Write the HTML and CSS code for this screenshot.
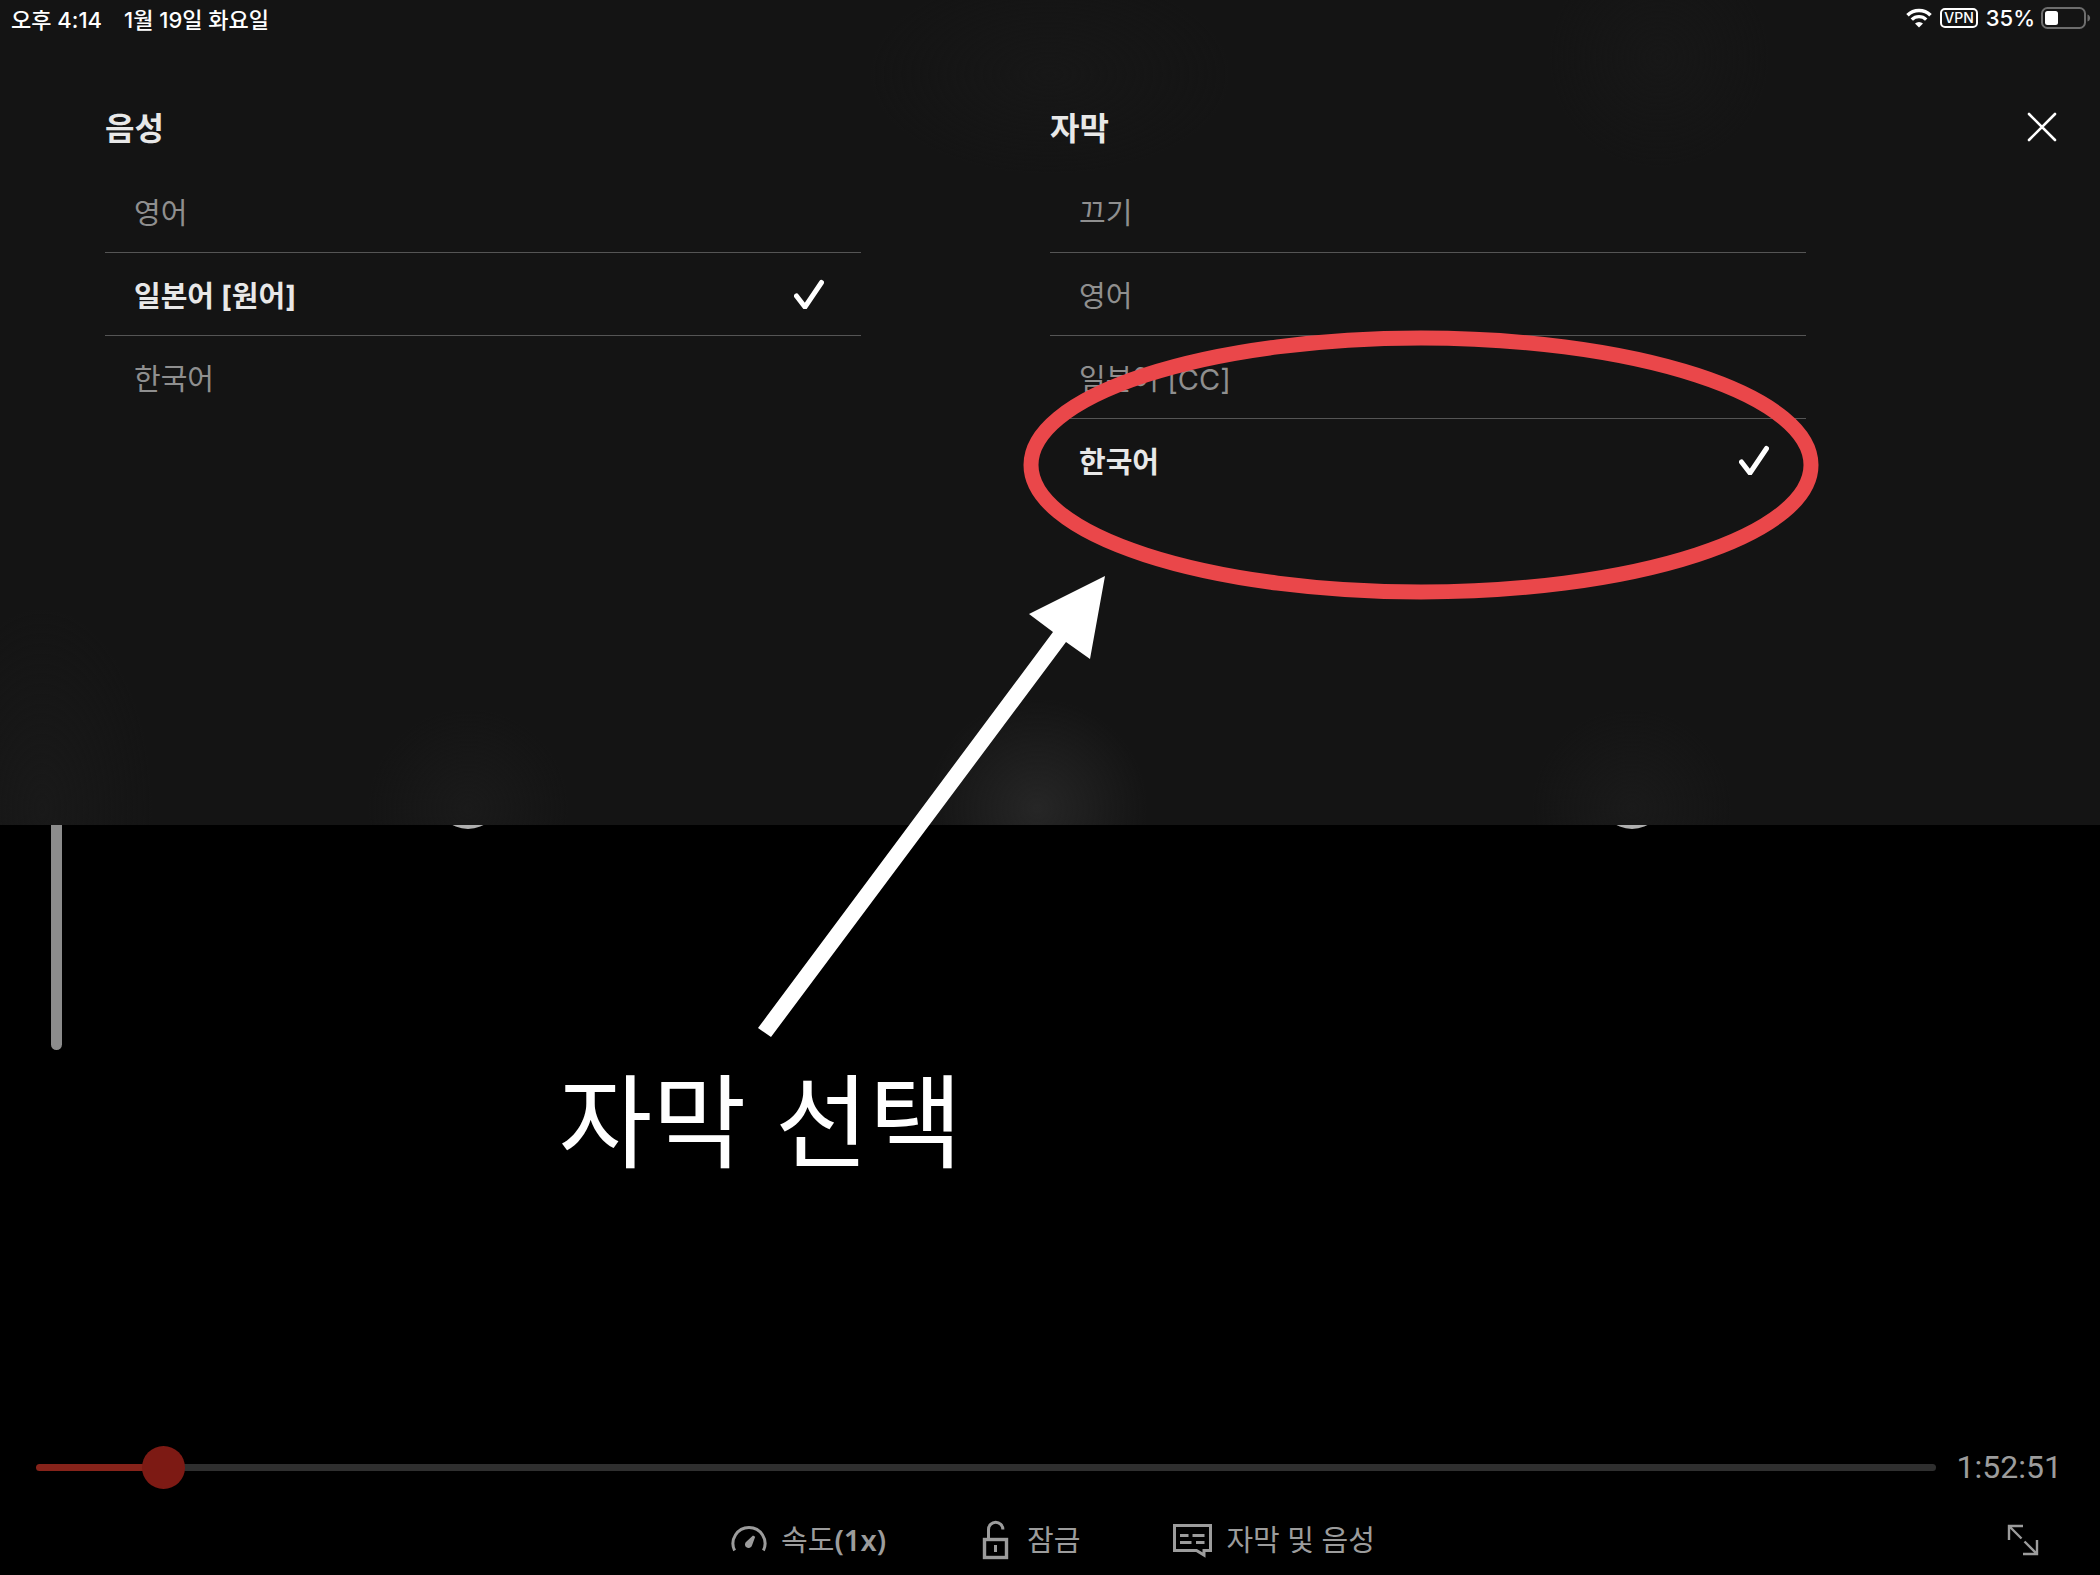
FILE: index.html
```
<!DOCTYPE html>
<html lang="ko">
<head>
  <meta charset="UTF-8">
  <title>자막 및 음성</title>
  <meta name="viewport" content="width=device-width, initial-scale=1.0">
  <link rel="stylesheet" href="styles.css">
</head>
<body>
  <div class="player">

    <div class="panel">
      <header class="status">
        <div class="status-left">
          <span>오후 4:14</span>
          <span>1월 19일 화요일</span>
        </div>
        <div class="status-right">
          <svg class="wifi" width="26" height="20" viewBox="0 0 26 20">
            <path d="M1.500 7.200A16.500 16.500 0 0 1 24.500 7.200" fill="none" stroke="#fff" stroke-width="3.600"/>
            <path d="M5.800 11.600A10.300 10.300 0 0 1 20.200 11.600" fill="none" stroke="#fff" stroke-width="3.400"/>
            <path d="M13 19.500L9 15.500A5.800 5.800 0 0 1 17 15.500Z" fill="#fff"/>
          </svg>
          <span class="vpn">VPN</span>
          <span>35%</span>
          <svg class="battery" width="50" height="22" viewBox="0 0 50 22">
            <rect x="1" y="1" width="43" height="20" rx="5.500" fill="none" stroke="#6d6d6d" stroke-width="2"/>
            <rect x="4" y="4" width="13" height="14" rx="2.500" fill="#fff"/>
            <path d="M46.500 7.500C50 8.500 50 13.500 46.500 14.500Z" fill="#6d6d6d"/>
          </svg>
        </div>
      </header>

      <div class="tracks">
        <section class="column">
          <h2>음성</h2>
          <ul>
            <li><label><input type="radio" name="audio">영어</label></li>
            <li><label><input type="radio" name="audio" checked>일본어 [원어]
              <svg class="check" width="30" height="30" viewBox="0 0 30 30"><path d="M2.500 17L11 28L27.500 3.500"/></svg></label></li>
            <li><label><input type="radio" name="audio">한국어</label></li>
          </ul>
        </section>
        <section class="column">
          <h2>자막</h2>
          <ul>
            <li><label><input type="radio" name="subs">끄기</label></li>
            <li><label><input type="radio" name="subs">영어</label></li>
            <li><label><input type="radio" name="subs">일본어 [CC]</label></li>
            <li><label><input type="radio" name="subs" checked>한국어
              <svg class="check" width="30" height="30" viewBox="0 0 30 30"><path d="M2.500 17L11 28L27.500 3.500"/></svg></label></li>
          </ul>
        </section>
        <button class="close" aria-label="닫기">
          <svg width="30" height="30" viewBox="0 0 30 30"><path d="M2 2L28 28M28 2L2 28" stroke="#fff" stroke-width="2.600" stroke-linecap="round"/></svg>
        </button>
      </div>
    </div>

    <div class="video">
      <input class="brightness" type="range" min="0" max="100" value="100" aria-label="밝기">
      <button class="skip back" aria-label="10초 뒤로"></button>
      <button class="skip forward" aria-label="10초 앞으로"></button>
    </div>

    <footer class="controls">
      <div class="timeline">
        <input class="seek" type="range" min="0" max="1000" value="57" aria-label="재생 위치">
        <span class="time">1:52:51</span>
      </div>
      <div class="toolbar">
        <div class="tools">
          <button>
            <svg width="36" height="36" viewBox="0 0 36 36" fill="none" stroke="#9c9c9c" stroke-width="3">
              <path d="M3.600 28.500A16 16 0 1 1 32.400 28.500"/>
              <path d="M22 13.500L24.200 14.800L21 23.500A3.600 3.600 0 1 1 15.500 19.500Z" fill="#9c9c9c" stroke="none"/>
            </svg>
            <span>속도<b>(1x)</b></span>
          </button>
          <button>
            <svg width="34" height="40" viewBox="-4 0 34 40" fill="none" stroke="#9c9c9c" stroke-width="3">
              <rect x="1.500" y="19.500" width="22" height="18" stroke-width="3.400"/>
              <path d="M5.500 19V9.500A7.200 7.200 0 0 1 19.900 9.500M12.500 25V32"/>
            </svg>
            <span>잠금</span>
          </button>
          <button>
            <svg width="39" height="36" viewBox="0 0 39 36" fill="none" stroke="#9c9c9c" stroke-width="3">
              <path d="M1.500 3.500H37.500V28.500H31V33L23.500 28.500H1.500Z"/>
              <path d="M7 13.500H15.500M19.500 13.500H31.500M7 20.500H18.500M23 20.500H31.500"/>
            </svg>
            <span>자막 및 음성</span>
          </button>
        </div>
        <button class="expand" aria-label="전체 화면">
          <svg width="32" height="32" viewBox="0 0 32 32" fill="none" stroke="#9c9c9c" stroke-width="2.400">
            <path d="M16 2H2V16M2 2L14.500 14.500M30 16V30H16M30 30L17.500 17.500"/>
          </svg>
        </button>
      </div>
    </footer>

    <!-- 안내 표시 -->
    <svg class="marks" viewBox="0 0 2100 1575">
      <ellipse cx="1421" cy="465" rx="390" ry="127" fill="none" stroke="#ea474a" stroke-width="15"/>
      <path d="M1105 576L1090 659L1066 642L771 1037L758 1028L1053 632L1029 614Z" fill="#fff"/>
    </svg>
    <p class="caption">자막 선택</p>
  </div>
</body>
</html>
```

FILE: styles.css
```
* {
  box-sizing: border-box;
}

body {
  margin: 0;
  background-color: #000;
  color: #fff;
  font-family: Inter, "Noto Sans CJK KR", sans-serif;
  font-size: 29px;
}

h2, ul, p {
  margin: 0;
  padding: 0;
}

button {
  background: none;
  border: none;
  padding: 0;
  color: inherit;
  font: inherit;
  cursor: pointer;
}

svg {
  display: block;
}

.player {
  position: relative;
  display: flex;
  flex-direction: column;
  min-height: 100vh;
}

.panel {
  min-height: 52.4vh;
  background:
    radial-gradient(circle 110px at 49.4% 98%, #262626, transparent),
    radial-gradient(circle 100px at 22.3% 98%, #1a1a1a, transparent),
    radial-gradient(circle 100px at 77.7% 98%, #1a1a1a, transparent),
    radial-gradient(ellipse 110px 200px at 2% 98%, #191919, transparent),
    radial-gradient(ellipse 180px 100px at 50% 9%, #171717, transparent),
    radial-gradient(circle 110px at 79% 7%, #171717, transparent),
    #141414;
}

/* Barra de status */
.status {
  display: flex;
  justify-content: space-between;
  align-items: center;
  height: 36px;
  padding: 0 9px 0 11px;
  font-size: 22px;
  font-weight: 500;
}

.status-left {
  display: flex;
  gap: 22px;
}

.status-right {
  display: flex;
  align-items: center;
  gap: 8px;
}

.battery {
  margin-left: -2px;
}

.vpn {
  border: 2px solid #fff;
  border-radius: 5px;
  padding: 0 2px;
  font-size: 14px;
  line-height: 16px;
}

.tracks {
  display: grid;
  grid-template-columns: 36vw 36vw 1fr;
  column-gap: 9vw;
  padding: 73px 43px 0 5vw;
}

.column h2 {
  font-size: 32px;
  line-height: 40px;
  margin-bottom: 21px;
  font-weight: bold;
  color: #e8e8e8;
}

.column ul {
  list-style: none;
}

.column li {
  border-bottom: 1px solid #555;
}

.column li:last-child {
  border-bottom: none;
}

.column label {
  display: flex;
  align-items: center;
  height: 82px;
  padding: 0 37px 0 29px;
  color: #8f8f8f;
  cursor: pointer;
}

.column label:has(:checked) {
  font-weight: bold;
  color: #e8e8e8;
}

.column input {
  appearance: none;
  margin: 0;
}

.check {
  margin-left: auto;
  fill: none;
  stroke: #fff;
  stroke-width: 5;
  stroke-linecap: round;
}

.close {
  justify-self: end;
  align-self: start;
  padding: 3px 0;
}

/* Vídeo */
.video {
  position: relative;
  flex: 1;
  overflow: hidden;
}

.brightness {
  appearance: none;
  display: block;
  width: 11px;
  height: 225px;
  margin: 0 0 0 51px;
  background-color: #8c8c8c;
  border-radius: 0 0 6px 6px;
  writing-mode: vertical-lr;
}

.brightness::-webkit-slider-thumb {
  appearance: none;
}

.skip {
  position: absolute;
  top: -60px;
  width: 64px;
  height: 64px;
  border-radius: 50%;
  background-color: #b0b0b0;
  transform: translateX(-50%);
}

.back {
  left: 22.3%;
}

.forward {
  left: 77.7%;
}

/* Controles */
.controls {
  color: #9c9c9c;
}

.timeline {
  display: flex;
  align-items: center;
  gap: 21px;
  padding: 0 38px 0 36px;
}

.seek {
  appearance: none;
  flex: 1;
  height: 44px;
  margin: 0;
  background: none;
}

.seek::-webkit-slider-runnable-track {
  height: 7px;
  border-radius: 4px;
  background: linear-gradient(to right, #86231a 6.7%, #2f2f2f 6.7%);
}

.seek::-webkit-slider-thumb {
  appearance: none;
  width: 43px;
  height: 43px;
  margin-top: -18px;
  border-radius: 50%;
  background-color: #7d1a14;
}

.time {
  font-family: Roboto, sans-serif;
  font-size: 32px;
}

.toolbar {
  display: grid;
  grid-template-columns: 1fr auto 1fr;
  align-items: center;
  height: 70px;
  margin-top: 16px;
  padding: 0 61px 0 67px;
}

.tools {
  grid-column: 2;
  display: flex;
  gap: 93px;
}

.tools button {
  display: flex;
  align-items: center;
  gap: 14px;
  font-family: "Noto Sans", "Noto Sans CJK KR", sans-serif;
  line-height: 40px;
}

.tools b {
  font-weight: 600;
}

.expand {
  justify-self: end;
}

/* Marcas por cima da tela */
.marks {
  position: absolute;
  inset: 0;
  width: 100%;
  height: 100%;
  pointer-events: none;
}

.caption {
  position: absolute;
  left: 26.6%;
  top: 67.2%;
  font-size: 102px;
  line-height: 130px;
}
```
